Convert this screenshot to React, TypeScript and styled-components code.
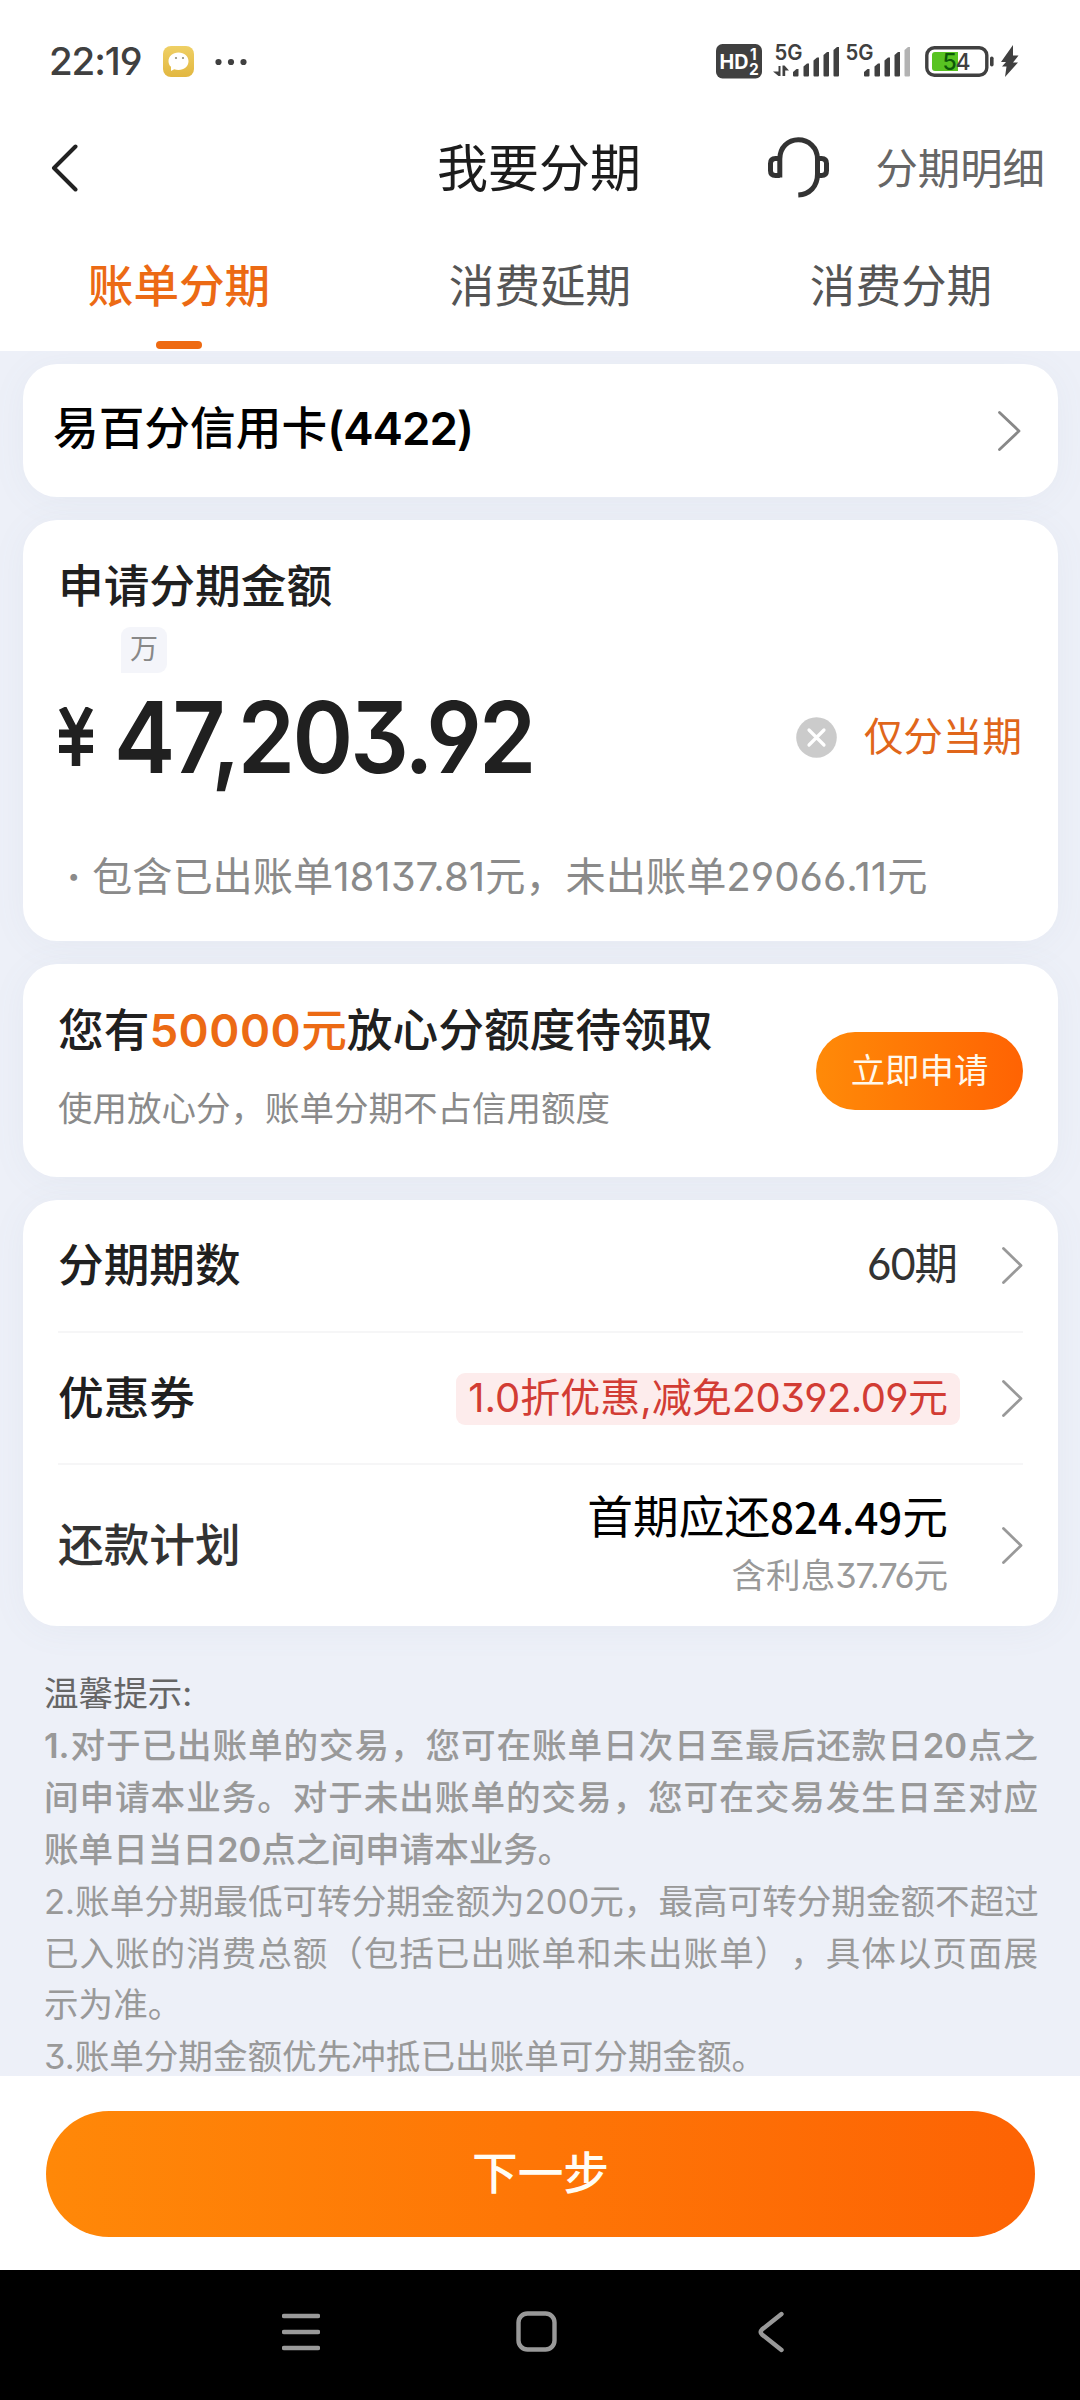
import React from "react";
import styled, { createGlobalStyle } from "styled-components";

const Global = createGlobalStyle`
  * { box-sizing: border-box; }
  body {
    margin: 0;
    background: #fff;
    font-family: Inter, "Noto Sans CJK SC", sans-serif;
    font-feature-settings: "cv03", "cv04", "cv09";
    text-spacing-trim: space-all;
    white-space: nowrap;
  }
  svg { display: block; flex: none; }
  button { font: inherit; border: 0; padding: 0; background: none; }
`;

const Screen = styled.div`
  width: 1080px;
  height: 2400px;
  display: flex;
  flex-direction: column;
  overflow: hidden;
`;

const StatusBar = styled.header`
  height: 122px;
  padding: 0 61px 0 49px;
  display: flex;
  align-items: center;
  justify-content: space-between;
`;

const StatusSide = styled.div`
  display: flex;
  align-items: center;
`;

const Clock = styled.span`
  font-size: 38.5px;
  font-weight: 500;
  letter-spacing: -1.1px;
  line-height: 40px;
  width: 114px;
  color: #404040;
`;

const TitleBar = styled.div`
  height: 92px;
  padding: 2px 35px 0;
  display: grid;
  grid-template-columns: 1fr auto 1fr;
  align-items: center;
`;

const BackButton = styled.button`
  margin: 0 0 2px 15px;
`;

const Title = styled.h1`
  margin: 0 2px 0 0;
  font-size: 51px;
  line-height: 60px;
  font-weight: 400;
  color: #1c1c1c;
`;

const TitleActions = styled.div`
  display: flex;
  align-items: center;
  justify-content: flex-end;
  gap: 46px;
`;

const ServiceButton = styled.button`
  margin-bottom: 3px;
`;

const DetailLink = styled.a`
  font-size: 42.4px;
  line-height: 60px;
  color: #666;
`;

const Tabs = styled.nav`
  height: 137px;
  display: grid;
  grid-template-columns: 358px 1fr 358px;
`;

const Tab = styled.a<{ $active?: boolean }>`
  display: flex;
  flex-direction: column;
  align-items: center;
  justify-content: space-between;
  padding: 42.500px 0 2px;
  font-size: 45.6px;
  line-height: 60px;
  font-weight: ${(p) => (p.$active ? 500 : 400)};
  color: ${(p) => (p.$active ? "#ec6a14" : "#555")};
  &::after {
    content: "";
    width: 46px;
    height: 8px;
    border-radius: 4px;
    background: ${(p) => (p.$active ? "#ee6a12" : "transparent")};
  }
`;

const Content = styled.main`
  height: 1725px;
  padding: 13px 22px 0 23px;
  display: flex;
  flex-direction: column;
  gap: 23px;
  background: #edf0f8;
  overflow: hidden;
`;

const Card = styled.section<{ $h: number }>`
  flex: none;
  height: ${(p) => p.$h}px;
  border-radius: 34px;
  background: #fff;
  box-shadow: 0 4px 36px rgba(120, 130, 150, 0.06);
`;

const CardPick = styled(Card)`
  display: flex;
  align-items: center;
  justify-content: space-between;
  padding: 0 37px 0 30px;
`;

const CardName = styled.span`
  padding-bottom: 3px;
  font-size: 45.7px;
  line-height: 56px;
  font-weight: 500;
  color: #000;
`;

const Num = styled.span<{ $ls?: number; $w?: number }>`
  letter-spacing: ${(p) => p.$ls ?? 0}px;
  ${(p) => p.$w && `font-weight: ${p.$w};`}
`;

const NarrowNum = styled.span`
  font-family: "Noto Sans CJK SC", sans-serif;
  font-size: 42px;
  font-weight: 500;
`;

const AmountCard = styled(Card)`
  padding: 38.5px 36px 0 35px;
  display: flex;
  flex-direction: column;
`;

const Heading = styled.h2`
  margin: 0;
  font-size: 45.7px;
  line-height: 56px;
  font-weight: 500;
  color: #202020;
`;

const UnitTag = styled.span`
  width: 46px;
  height: 46px;
  margin: 12.5px 0 0 63px;
  border-radius: 9px 9px 9px 0;
  background: #f4f5fa;
  color: #888;
  font-size: 28px;
  line-height: 44px;
  text-align: center;
`;

const AmountRow = styled.div`
  height: 126px;
  padding-top: 2px;
  display: flex;
  align-items: center;
`;

const Amount = styled.span`
  margin-left: 20px;
  flex: 1;
  font-size: 99px;
  line-height: 126px;
  font-weight: 600;
  letter-spacing: -3px;
  color: #202020;
  transform: scaleX(0.93);
  transform-origin: left center;
`;

const CurrentOnly = styled.a`
  margin-left: 27px;
  font-size: 39.6px;
  line-height: 60px;
  color: #e0661a;
`;

const Breakdown = styled.p`
  margin: 47.5px 0 0 9px;
  font-size: 40.2px;
  line-height: 60px;
  color: #8a8a8a;
  display: flex;
`;

const Bullet = styled.span`
  width: 12px;
  margin-right: 13px;
  font-weight: 700;
`;

const OfferCard = styled(Card)`
  padding: 0 35px 0 35px;
  display: flex;
  align-items: center;
  justify-content: space-between;
`;

const OfferText = styled.div`
  padding-bottom: 7px;
  display: flex;
  flex-direction: column;
  gap: 28px;
`;

const Highlight = styled.em`
  font-style: normal;
  color: #ec6a14;
`;

const OfferNote = styled.p`
  margin: 0;
  font-size: 34.5px;
  line-height: 44px;
  color: #8a8a8a;
`;

const ApplyButton = styled.button`
  width: 207px;
  height: 78px;
  border-radius: 39px;
  background: linear-gradient(90deg, #ff8a08, #ff6303);
  color: #fff8ec;
  font-size: 34.4px;
  line-height: 74px;
`;

const Rows = styled(Card)`
  padding: 0 35px 0 35px;
`;

const Row = styled.div<{ $h: number; $last?: boolean }>`
  height: ${(p) => p.$h}px;
  display: flex;
  align-items: center;
  border-bottom: ${(p) => (p.$last ? "0" : "2px solid #f6f6f7")};
`;

const RowLabel = styled(Heading)<{ $soft?: boolean }>`
  flex: 1;
  padding-top: 1px;
  color: ${(p) => (p.$soft ? "#333" : "#202020")};
`;

const RowValue = styled.span`
  margin: 0 44px 3px 0;
  font-size: 43.5px;
  line-height: 56px;
  color: #333;
`;

const Coupon = styled.span`
  margin: 2px 42px 0 0;
  height: 52px;
  padding: 0 12px 0 12px;
  border-radius: 9px;
  background: #fdecec;
  color: #d23c34;
  font-size: 40px;
  line-height: 50px;
`;

const Plan = styled.div`
  margin: 0 54px 5px 0;
  display: flex;
  flex-direction: column;
  align-items: flex-end;
  gap: 7px;
`;

const PlanMain = styled.span`
  height: 56px;
  font-size: 45.7px;
  line-height: 56px;
  color: #000;
`;

const PlanNote = styled.span`
  font-size: 34.6px;
  line-height: 48px;
  color: #999;
`;

const Tips = styled.div`
  margin: 19px 20px 0 21px;
  font-size: 34.6px;
  line-height: 51.9px;
  color: #999;
`;

const TipLine = styled.p<{ $strong?: boolean; $full?: boolean; $head?: boolean }>`
  margin: 0;
  font-weight: ${(p) => (p.$strong ? 500 : 400)};
  text-align-last: ${(p) => (p.$full ? "justify" : "left")};
  ${(p) => p.$head && "color: #666;"}
`;

const Footer = styled.footer`
  height: 194px;
  padding: 35px 45px 0 46px;
  background: #fff;
`;

const NextButton = styled.button`
  width: 100%;
  height: 126px;
  border-radius: 63px;
  background: linear-gradient(90deg, #ff8808, #fd6304);
  color: #fffdf5;
  font-size: 45.7px;
  line-height: 122px;
  font-weight: 500;
`;

const SystemNav = styled.nav`
  height: 130px;
  padding: 0 0 7px 282px;
  display: grid;
  grid-template-columns: 234px 242px auto;
  align-items: center;
  background: #000;
`;

const ink = "#404040";

const AppBadge = () => (
  <svg width="31" height="31" viewBox="0 0 31 31">
    <defs>
      <linearGradient id="badge" x1="0" y1="0" x2="0" y2="1">
        <stop offset="0" stopColor="#efd065" />
        <stop offset="1" stopColor="#e2b740" />
      </linearGradient>
    </defs>
    <rect width="31" height="31" rx="8" fill="url(#badge)" />
    <path d="M15.500 6.500c5.800 0 10 3.700 10 8.700s-4.200 8.700-10 8.700c-1.500 0-3-.2-4.300-.7L8 25v-4.200c-1.700-1.500-2.500-3.400-2.500-5.600 0-5 4.200-8.700 10-8.700z" fill="#fff" />
    <circle cx="13" cy="12" r="1.100" fill="#8d8d78" />
    <circle cx="20" cy="12" r="1.100" fill="#8d8d78" />
  </svg>
);

const More = styled.span`
  margin: 1px 0 0 21px;
`;

const Dots = () => (
  <More>
    <svg width="32" height="8" viewBox="0 0 32 8">
      {[3.5, 16, 28.5].map((x) => (
        <circle key={x} cx={x} cy="4" r="3.100" fill={ink} />
      ))}
    </svg>
  </More>
);

const HdBadge = () => (
  <svg width="46" height="35" viewBox="0 0 46 35">
    <rect width="46" height="34.500" rx="6.500" fill={ink} />
    <g fill="#fff" fontWeight="700">
      <text x="3.500" y="25" fontSize="20" textLength="29" lengthAdjust="spacingAndGlyphs">HD</text>
      <text x="34" y="16" fontSize="15.500">1</text>
      <text x="33" y="30.500" fontSize="15.500">2</text>
    </g>
  </svg>
);

const bars = [
  [20, 25],
  [30.5, 19.5],
  [40.5, 13.5],
  [50.5, 8],
  [60.5, 3],
];

const Signal = ({ faded, data }: { faded?: boolean; data?: boolean }) => (
  <svg width="71" height="50" viewBox="0 -8 71 50">
    <text x="1.500" y="16" fontSize="21" fontWeight="600" fill={ink} textLength="28" lengthAdjust="spacingAndGlyphs">5G</text>
    {bars.map(([x, y], i) => (
      <path
        key={x}
        d={`M${x} ${y + 3}L${x + 3.5} ${y}h2v${31.5 - y}q0 1-1 1h-3.500q-1 0-1-1z`}
        fill={faded && i === 4 ? "#b3b3b3" : ink}
      />
    ))}
    {data && <path d="M5.500 22h2v10H5.500L0 27.500h5.500zM9.500 32V21.500h2l4.500 5h-3.800V32z" fill={ink} />}
  </svg>
);

const SignalGroup = styled.div`
  display: flex;
  margin: 0 10px 0 11px;
`;

const Battery = () => (
  <svg width="69" height="31" viewBox="0 0 69 31">
    <rect x="1.800" y="1.800" width="60" height="27.400" rx="7.500" fill="none" stroke={ink} strokeWidth="3.400" />
    <path d="M10 6h23v19H10q-3 0-3-3V9q0-3 3-3z" fill="#58c322" />
    <rect x="65" y="10.500" width="3.600" height="10" rx="1.800" fill={ink} />
    <text x="17.500" y="24" fontSize="23" fontWeight="500" letterSpacing="-1.200" fill="#0d5a08">
      5<tspan fill={ink}>4</tspan>
    </text>
  </svg>
);

const Charging = styled.span`
  margin-left: 7px;
`;

const Bolt = () => (
  <Charging>
    <svg width="18" height="32" viewBox="0 0 18 32">
      <path d="M12 0L0 17h5L1 21.500h4.500L4 32 17 17.500h-5l5.500-7H12z" fill={ink} />
    </svg>
  </Charging>
);

const BackIcon = () => (
  <svg width="29" height="48" viewBox="0 0 29 48">
    <path d="M25.500 2.500L4 24l21.500 21.500" fill="none" stroke="#222" strokeWidth="4" strokeLinecap="round" strokeLinejoin="round" />
  </svg>
);

const Headset = () => (
  <svg width="61" height="61" viewBox="0 0 61 61">
    <g fill="none" stroke="#333" strokeWidth="5">
      <path d="M11.800 40.500V22C11.800 10.500 20 2.800 30.300 2.800S49.500 10.500 49.500 22v15c0 12.500-8 20.500-19.200 20.900" />
      <path d="M11.800 21.500H7.500q-5 0-5 5v7q0 5 5 5h4.300M49.500 21.500h4q5 0 5 5v7q0 5-5 5h-4" />
    </g>
  </svg>
);

const Chevron = ({ w, h, color }: { w: number; h: number; color: string }) => (
  <svg width={w} height={h} viewBox={`0 0 ${w} ${h}`}>
    <path d={`M1.500 1.500L${w - 2} ${h / 2}L1.500 ${h - 1.5}`} fill="none" stroke={color} strokeWidth="2.800" strokeLinecap="round" strokeLinejoin="round" />
  </svg>
);

const Yuan = () => (
  <svg width="36" height="60" viewBox="0 0 36 60">
    <path d="M4.500 1L18 27 31.500 1" fill="none" stroke="#202020" strokeWidth="8" />
    <path d="M1 26.500h34M1 42h34" stroke="#202020" strokeWidth="8" />
    <path d="M18 24v35" stroke="#202020" strokeWidth="8.500" />
  </svg>
);

const ClearIcon = () => (
  <svg width="41" height="41" viewBox="0 0 41 41">
    <circle cx="20.500" cy="20.500" r="20.300" fill="#cbcbcb" />
    <path d="M13 13l15 15M28 13L13 28" stroke="#fff" strokeWidth="3.200" strokeLinecap="round" />
  </svg>
);

export default function App() {
  return (
    <>
      <Global />
      <Screen>
        <StatusBar>
          <StatusSide>
            <Clock>22:19</Clock>
            <AppBadge />
            <Dots />
          </StatusSide>
          <StatusSide>
            <HdBadge />
            <SignalGroup>
              <Signal data />
              <Signal faded />
            </SignalGroup>
            <Battery />
            <Bolt />
          </StatusSide>
        </StatusBar>

        <TitleBar>
          <BackButton>
            <BackIcon />
          </BackButton>
          <Title>我要分期</Title>
          <TitleActions>
            <ServiceButton>
              <Headset />
            </ServiceButton>
            <DetailLink>分期明细</DetailLink>
          </TitleActions>
        </TitleBar>

        <Tabs>
          <Tab $active>账单分期</Tab>
          <Tab>消费延期</Tab>
          <Tab>消费分期</Tab>
        </Tabs>

        <Content>
          <CardPick $h={133}>
            <CardName>
              易百分信用卡<Num $ls={-1} $w={600}>(4422)</Num>
            </CardName>
            <Chevron w={23} h={40} color="#888" />
          </CardPick>

          <AmountCard $h={421}>
            <Heading>申请分期金额</Heading>
            <UnitTag>万</UnitTag>
            <AmountRow>
              <Yuan />
              <Amount>47,203.92</Amount>
              <ClearIcon />
              <CurrentOnly>仅分当期</CurrentOnly>
            </AmountRow>
            <Breakdown>
              <Bullet>·</Bullet>
              <span>
                包含已出账单<Num>18137.81</Num>元，未出账单<Num>29066.11</Num>元
              </span>
            </Breakdown>
          </AmountCard>

          <OfferCard $h={213}>
            <OfferText>
              <Heading>
                您有
                <Highlight>
                  <Num $ls={0.5} $w={600}>50000</Num>元
                </Highlight>
                放心分额度待领取
              </Heading>
              <OfferNote>使用放心分，账单分期不占信用额度</OfferNote>
            </OfferText>
            <ApplyButton>立即申请</ApplyButton>
          </OfferCard>

          <Rows $h={426}>
            <Row $h={133}>
              <RowLabel>分期期数</RowLabel>
              <RowValue>
                <Num $ls={-2.5}>60</Num>期
              </RowValue>
              <Chevron w={21} h={37} color="#999" />
            </Row>
            <Row $h={132}>
              <RowLabel>优惠券</RowLabel>
              <Coupon>
                1.0折优惠,减免<Num $ls={-0.6}>20392.09</Num>元
              </Coupon>
              <Chevron w={21} h={37} color="#999" />
            </Row>
            <Row $h={161} $last>
              <RowLabel $soft>还款计划</RowLabel>
              <Plan>
                <PlanMain>
                  首期应还<NarrowNum>824.49</NarrowNum>元
                </PlanMain>
                <PlanNote>
                  含利息<Num $ls={-1.1}>37.76</Num>元
                </PlanNote>
              </Plan>
              <Chevron w={21} h={37} color="#999" />
            </Row>
          </Rows>

          <Tips>
            <TipLine $head>温馨提示:</TipLine>
            <TipLine $strong $full>
              <Num $w={600}>1.</Num>对于已出账单的交易，您可在账单日次日至最后还款日<Num $w={600}>20</Num>点之
            </TipLine>
            <TipLine $strong $full>间申请本业务。对于未出账单的交易，您可在交易发生日至对应</TipLine>
            <TipLine $strong>
              账单日当日<Num $w={600}>20</Num>点之间申请本业务。
            </TipLine>
            <TipLine $full>2.账单分期最低可转分期金额为200元，最高可转分期金额不超过</TipLine>
            <TipLine $full>已入账的消费总额（包括已出账单和未出账单），具体以页面展</TipLine>
            <TipLine>示为准。</TipLine>
            <TipLine>3.账单分期金额优先冲抵已出账单可分期金额。</TipLine>
          </Tips>
        </Content>

        <Footer>
          <NextButton>下一步</NextButton>
        </Footer>

        <SystemNav>
          <svg width="38" height="38" viewBox="0 0 38 38">
            <path d="M2 3h34M2 19h34M2 35h34" stroke="#999" strokeWidth="4.400" strokeLinecap="round" />
          </svg>
          <svg width="41" height="41" viewBox="0 0 41 41">
            <rect x="2.500" y="2.500" width="36" height="36" rx="9" fill="none" stroke="#999" strokeWidth="4.400" />
          </svg>
          <svg width="26" height="42" viewBox="0 0 26 42">
            <path d="M23.500 3L4 18.500q-2.500 2.500 0 5L23.500 39" fill="none" stroke="#999" strokeWidth="4.400" strokeLinecap="round" />
          </svg>
        </SystemNav>
      </Screen>
    </>
  );
}
